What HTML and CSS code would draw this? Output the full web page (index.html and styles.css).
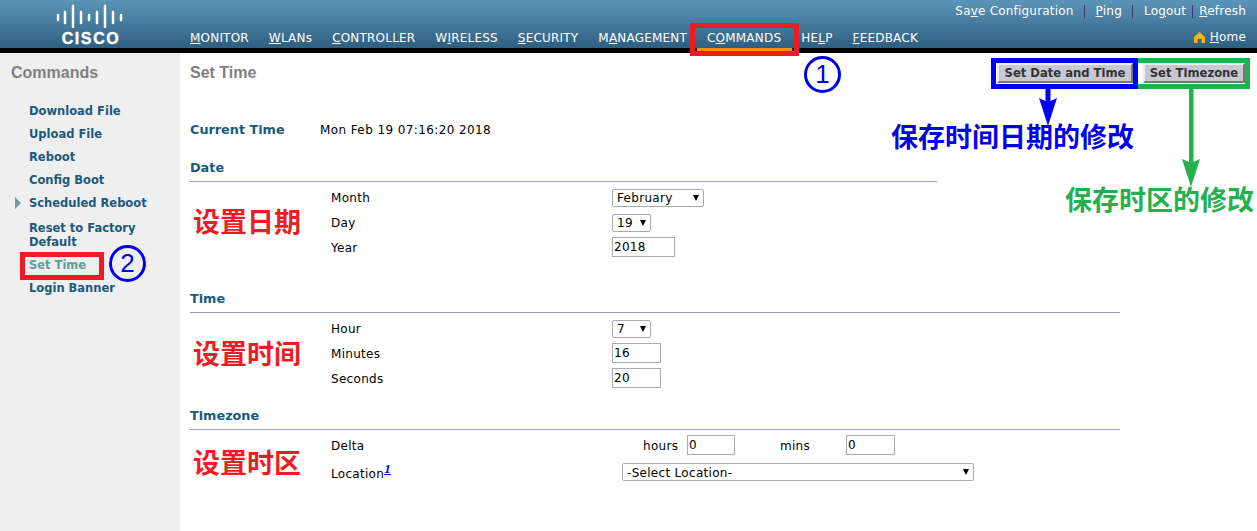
FILE: index.html
```html
<!DOCTYPE html>
<html lang="zh-CN">

<head>
  <meta charset="UTF-8" />
  <title>Set Time</title>
  <link rel="stylesheet" href="styles.css">
</head>

<body>
  <div class="page">
    <header class="topbar">
      <div class="logo">
        <svg class="logo-bars" width="70" height="24" viewBox="0 0 70 24">
          <g stroke="#fff" stroke-width="2.500" stroke-linecap="round">
            <path d="M2 11v5M9 8v11M17 2v21M25 8v11M33 11v5M41 8v11M49 2v21M57 8v11M65 11v5" />
          </g>
        </svg>
        <span class="logo-text">CISCO</span>
      </div>
      <nav class="mainnav">
        <a><u>M</u>ONITOR</a>
        <a><u>W</u>LANs</a>
        <a><u>C</u>ONTROLLER</a>
        <a>W<u>I</u>RELESS</a>
        <a><u>S</u>ECURITY</a>
        <a>M<u>A</u>NAGEMENT</a>
        <a class="active">C<u>O</u>MMANDS</a>
        <a>HE<u>L</u>P</a>
        <a><u>F</u>EEDBACK</a>
      </nav>
      <div class="toplinks">
        <div class="utility">
          <a>Sa<u>v</u>e Configuration</a><i></i>
          <a><u>P</u>ing</a><i></i>
          <a>Lo<u>g</u>out</a><i class="tight"></i>
          <a><u>R</u>efresh</a>
        </div>
        <a class="home">
          <svg width="11" height="11" viewBox="0 0 11 11">
            <path fill="#f5b400" d="M5.500 0 11 5v6H7.500V7h-4v4H0V5z" />
          </svg>
          <span><u>H</u>ome</span>
        </a>
      </div>
    </header>

    <div class="layout">
      <aside class="sidebar">
        <h2>Commands</h2>
        <ul>
          <li>Download File</li>
          <li>Upload File</li>
          <li>Reboot</li>
          <li>Config Boot</li>
          <li class="has-sub">Scheduled Reboot</li>
          <li>Reset to Factory Default</li>
          <li class="current">Set Time</li>
          <li>Login Banner</li>
        </ul>
      </aside>

      <main class="content">
        <div class="toolbar">
          <h1>Set Time</h1>
          <div class="buttons">
            <button type="button">Set Date and Time</button>
            <button type="button">Set Timezone</button>
          </div>
        </div>

        <div class="current-time">
          <h3>Current Time</h3>
          <span>Mon Feb 19 07:16:20 2018</span>
        </div>

        <section class="group group-date">
          <h3>Date</h3>
          <div class="row">
            <label>Month</label>
            <div class="select w-month"><select><option>February</option></select></div>
          </div>
          <div class="row">
            <label>Day</label>
            <div class="select w-short"><select><option>19</option></select></div>
          </div>
          <div class="row">
            <label>Year</label>
            <input class="w-year" type="text" value="2018" />
          </div>
        </section>

        <section class="group group-time">
          <h3>Time</h3>
          <div class="row">
            <label>Hour</label>
            <div class="select w-short"><select><option>7</option></select></div>
          </div>
          <div class="row">
            <label>Minutes</label>
            <input class="w-num" type="text" value="16" />
          </div>
          <div class="row">
            <label>Seconds</label>
            <input class="w-num" type="text" value="20" />
          </div>
        </section>

        <section class="group group-zone">
          <h3>Timezone</h3>
          <div class="row">
            <label>Delta</label>
            <div class="delta">
              <span class="hours">hours</span>
              <input class="w-delta" type="text" value="0" />
              <span class="mins">mins</span>
              <input class="w-num" type="text" value="0" />
            </div>
          </div>
          <div class="row row-tall">
            <label class="label-location">Location<a class="footnote">1</a></label>
            <div class="select w-location"><select><option>-Select Location-</option></select></div>
          </div>
        </section>
      </main>
    </div>

    <!-- annotations drawn over the screenshot -->
    <div class="box box-commands"></div>
    <div class="box box-settime"></div>
    <div class="box box-date"></div>
    <div class="box box-zone"></div>
    <div class="num num-1">1</div>
    <div class="num num-2">2</div>
    <svg class="arrow arrow-blue" width="18" height="37" viewBox="0 0 18 37">
      <path fill="#0000f0" d="M6.500 0h5v12l6.500-3-9 28-9-28 6.500 3z" />
    </svg>
    <svg class="arrow arrow-green" width="18" height="98" viewBox="0 0 18 98">
      <path fill="#22b14c" d="M7 0h4.500v73l6.500-3-9 28-9-28 7 3z" />
    </svg>
    <div class="note note-red note-date">设置日期</div>
    <div class="note note-red note-time">设置时间</div>
    <div class="note note-red note-tz">设置时区</div>
    <div class="note note-blue">保存时间日期的修改</div>
    <div class="note note-green">保存时区的修改</div>
  </div>
</body>

</html>
```

FILE: styles.css
```css
* {
  box-sizing: border-box;
}
body {
  margin: 0;
  font-family: "DejaVu Sans", Verdana, sans-serif;
  font-size: 12px;
  color: #000;
  background: #fff;
}
.page {
  position: relative;
  min-height: 100vh;
  display: flex;
  flex-direction: column;
  overflow: hidden;
}

/* header */
.topbar {
  height: 53px;
  flex: none;
  display: flex;
  color: #fff;
  background: linear-gradient(to bottom, #5c95b9, #2f5f80);
  background-size: 100% 48px;
  background-repeat: no-repeat;
  background-color: #000;
  padding-right: 11px;
  letter-spacing: 0.2px;
}
.logo {
  width: 190px;
  flex: none;
  padding: 4px 0 0 56px;
}
.logo-bars {
  display: block;
}
.logo-text {
  display: block;
  width: 70px;
  margin-top: 3px;
  text-align: center;
  font: bold 16px/16px "Liberation Sans", sans-serif;
  letter-spacing: 1.6px;
  -webkit-text-stroke: 0.4px #fff;
}
.mainnav {
  display: flex;
  gap: 20px;
  height: 48px;
  align-items: flex-end;
  padding-bottom: 3px;
  line-height: 14px;
}
.mainnav .active {
  position: relative;
}
.mainnav .active::after {
  content: "";
  position: absolute;
  left: -10px;
  right: -11px;
  top: 17px;
  height: 4px;
  background: #ff9000;
}
.toplinks {
  margin-left: auto;
  display: flex;
  flex-direction: column;
  align-items: flex-end;
}
.utility {
  display: flex;
  align-items: center;
  height: 22px;
}
.utility i {
  width: 1px;
  height: 13px;
  margin: 0 10.500px;
  background: #3d3d70;
}
.utility i.tight {
  margin: 0 6px;
}
.home {
  display: flex;
  align-items: center;
  gap: 5px;
  margin-top: 8px;
  line-height: 14px;
}

/* sidebar */
.layout {
  flex: 1;
  display: flex;
}
.sidebar {
  width: 180px;
  flex: none;
  background: #efefef;
  padding: 11px 0 0 11px;
}
.sidebar h2 {
  margin: 0;
  font: bold 16px/18px "Liberation Sans", sans-serif;
  color: #808080;
}
.sidebar ul {
  list-style: none;
  margin: 22px 0 0;
  padding: 0 0 0 18px;
  width: 150px;
}
.sidebar li {
  font-weight: bold;
  font-size: 11.500px;
  line-height: 14px;
  color: #1a5a7c;
  margin-bottom: 9px;
}
.sidebar li.has-sub {
  position: relative;
  margin-bottom: 11px;
}
.sidebar li.has-sub::before {
  content: "";
  position: absolute;
  left: -14px;
  top: 1px;
  border-left: 6px solid #6d9c9c;
  border-top: 6px solid transparent;
  border-bottom: 6px solid transparent;
}
.sidebar li.current {
  color: #669999;
}

/* content */
.content {
  flex: 1;
  padding: 10px 12px 0 10px;
}
.toolbar {
  display: flex;
  justify-content: space-between;
  height: 20px;
}
.toolbar h1 {
  margin: 1px 0 0;
  font: bold 16px/18px "Liberation Sans", sans-serif;
  color: #808080;
}
.buttons {
  display: flex;
  gap: 10px;
}
.buttons button {
  height: 20px;
  padding: 0;
  width: 136px;
  font: bold 11.600px/16px "DejaVu Sans", sans-serif;
  color: #333;
  background: #c8c8d2;
  border: 2px solid;
  border-color: #eee #777 #777 #eee;
}
.buttons button:last-child {
  width: 102px;
}
h3 {
  margin: 0;
  font-size: 12.800px;
  line-height: 14px;
  font-weight: bold;
  color: #1a5a7c;
}
.current-time {
  display: flex;
  margin-top: 40px;
  line-height: 14px;
  letter-spacing: 0.4px;
}
.current-time h3 {
  width: 130px;
  letter-spacing: 0;
}
.group {
  width: 930px;
}
.group h3 {
  padding: 1px 0 6px;
  border-bottom: 1px solid #9a9eb8;
  margin-bottom: 3px;
  height: 22px;
}
.group-date {
  margin-top: 23px;
}
.group-date h3 {
  width: 747px;
}
.group-time {
  margin-top: 31px;
}
.group-zone {
  margin-top: 17px;
}
.row {
  display: grid;
  grid-template-columns: 281px 1fr;
  padding-left: 141px;
  height: 25px;
  align-items: center;
  line-height: 14px;
  letter-spacing: 0.3px;
}
.row-tall {
  height: 28px;
}
.row label {
  white-space: nowrap;
}
.label-location {
  padding-top: 4px;
}
.footnote {
  font: italic bold 13px "Liberation Serif", serif;
  color: #0000ee;
  text-decoration: underline;
  vertical-align: 5px;
  line-height: 0;
}

/* form controls */
input {
  height: 20px;
  margin-bottom: 1px;
  padding: 0 1px;
  font: 12px "DejaVu Sans", sans-serif;
  letter-spacing: 0.3px;
  color: #000;
  border: 1px solid #aaa;
  border-radius: 0;
  outline: none;
}
.w-year {
  width: 63px;
}
.w-num {
  width: 49px;
}
.w-delta {
  width: 48px;
}
.select {
  position: relative;
  height: 18px;
}
.select::after {
  content: "";
  position: absolute;
  right: 5px;
  top: 6px;
  border-top: 6px solid #000;
  border-left: 3px solid transparent;
  border-right: 3px solid transparent;
  pointer-events: none;
}
.select select {
  appearance: none;
  display: block;
  width: 100%;
  height: 18px;
  padding: 1px 0 0 4px;
  font: 12px "DejaVu Sans", sans-serif;
  letter-spacing: 0.3px;
  color: #000;
  background: #fff;
  border: 1px solid #aaa;
  border-radius: 2px;
}
.w-month {
  width: 92px;
}
.w-short {
  width: 39px;
}
.w-location {
  width: 352px;
  margin-left: 10px;
}
.delta {
  display: flex;
  align-items: center;
  padding-left: 31px;
}
.hours {
  width: 44px;
}
.mins {
  width: 66px;
  margin-left: 45px;
}

/* annotations */
.box {
  position: absolute;
  border: 5px solid;
}
.box-commands {
  left: 690px;
  top: 23px;
  width: 109px;
  height: 33px;
  border-color: #ed1c24;
}
.box-settime {
  left: 20px;
  top: 252px;
  width: 84px;
  height: 28px;
  border-color: #ed1c24;
}
.box-date {
  left: 991px;
  top: 58px;
  width: 147px;
  height: 31px;
  border-color: #0000f0;
}
.box-zone {
  left: 1138px;
  top: 58px;
  width: 112px;
  height: 31px;
  border-color: #22b14c;
  border-left: 0;
}
.num {
  position: absolute;
  width: 37px;
  height: 37px;
  border: 3px solid #0000f0;
  border-radius: 50%;
  color: #0000f0;
  font: 26px/31px "Liberation Sans", sans-serif;
  text-align: center;
}
.num-1 {
  left: 804px;
  top: 56px;
}
.num-2 {
  left: 109px;
  top: 245px;
}
.arrow {
  position: absolute;
}
.arrow-blue {
  left: 1039px;
  top: 89px;
}
.arrow-green {
  left: 1182px;
  top: 89px;
}
.note {
  position: absolute;
  font: bold 27px/34px "Noto Sans CJK SC", sans-serif;
  white-space: nowrap;
}
.note-red {
  color: #ed1c24;
  left: 193px;
}
.note-date {
  top: 204px;
}
.note-time {
  top: 336px;
}
.note-tz {
  top: 445px;
}
.note-blue {
  left: 891px;
  top: 119px;
  color: #0000f0;
}
.note-green {
  left: 1065px;
  top: 182px;
  color: #22b14c;
}
```
